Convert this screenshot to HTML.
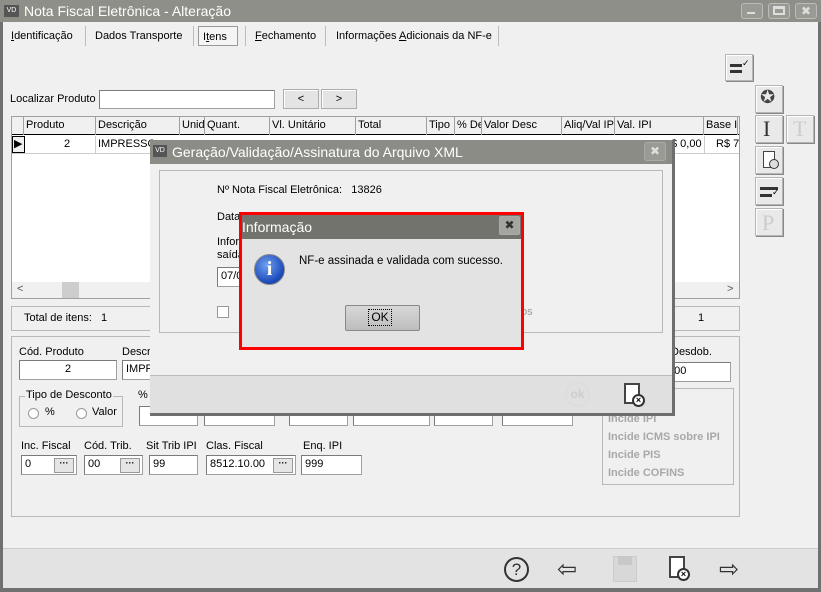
<!DOCTYPE html>
<html><head><meta charset="utf-8">
<style>
*{box-sizing:border-box;margin:0;padding:0}
body{width:821px;height:592px;overflow:hidden;background:#f0f0f0;font-family:"Liberation Sans","DejaVu Sans",sans-serif;font-size:11px;color:#000;position:relative}
.a{position:absolute}
.t{position:absolute;white-space:nowrap}
.inp{position:absolute;background:#fff;border:1px solid #a0a0a0;border-top-color:#7a7a7a;border-left-color:#7a7a7a;padding:2px 3px;white-space:nowrap;overflow:hidden}
.btn{position:absolute;background:#e4e4e4;border:1px solid #adadad;box-shadow:inset 1px 1px #fff}
.hd{position:absolute;top:0;height:18px;border-right:1px solid #a0a0a0;padding:2px 2px;white-space:nowrap;overflow:hidden}
.tb{position:absolute;width:28px;height:28px;background:#e9e9e9;border:1px solid #b5b5b5;box-shadow:inset 1px 1px #fff,1px 1px #888}
.dots{position:absolute;right:2px;top:2px;width:20px;height:15px;background:#e5e5e5;border:1px solid #999;font-size:9px;text-align:center;line-height:9px;font-weight:bold}
.dis{color:#a8a8a8;font-weight:bold;font-size:11px}
</style></head><body>
<div class="a" style="left:0;top:0;width:821px;height:22px;background:#8f8f89"></div>
<div class="a" style="left:4px;top:5px;width:15px;height:12px;background:#555;color:#fff;font-size:7px;text-align:center;line-height:12px">VD</div>
<div class="t" style="left:24px;top:3px;font-size:14px;color:#fff">Nota Fiscal Eletrônica - Alteração</div>
<div class="a" style="left:741px;top:3px;width:22px;height:16px;border:1px solid #bbb;border-radius:3px;background:#9a9a94"></div>
<div class="a" style="left:747px;top:12px;width:8px;height:2px;background:#ddd"></div>
<div class="a" style="left:768px;top:3px;width:22px;height:16px;border:1px solid #bbb;border-radius:3px;background:#9a9a94"></div>
<div class="a" style="left:773px;top:6px;width:12px;height:9px;border:2px solid #ddd;border-top-width:3px"></div>
<div class="a" style="left:795px;top:3px;width:22px;height:16px;border:1px solid #bbb;border-radius:3px;background:#9a9a94;color:#ddd;font-weight:bold;text-align:center;line-height:14px;font-size:12px">✖</div>
<div class="a" style="left:0;top:22px;width:3px;height:570px;background:#707070"></div>
<div class="a" style="left:818px;top:22px;width:3px;height:570px;background:#707070"></div>
<div class="a" style="left:0;top:588px;width:821px;height:4px;background:#707070"></div>

<div class="t" style="left:11px;top:30px"><u>I</u>dentificação</div>
<div class="a" style="left:85px;top:26px;width:1px;height:20px;background:#bbb"></div>
<div class="t" style="left:95px;top:30px">Dados Transporte</div>
<div class="a" style="left:193px;top:26px;width:1px;height:20px;background:#bbb"></div>
<div class="a" style="left:198px;top:26px;width:40px;height:20px;border:1px solid #999;background:#f5f5f5"></div>
<div class="t" style="left:203px;top:31px">I<u>t</u>ens</div>
<div class="a" style="left:245px;top:26px;width:1px;height:20px;background:#bbb"></div>
<div class="t" style="left:255px;top:30px"><u>F</u>echamento</div>
<div class="a" style="left:325px;top:26px;width:1px;height:20px;background:#bbb"></div>
<div class="t" style="left:336px;top:30px">Informações <u>A</u>dicionais da NF-e</div>
<div class="a" style="left:498px;top:26px;width:1px;height:20px;background:#bbb"></div>

<div class="tb" style="left:725px;top:54px;width:28px;height:27px"><div class="a" style="left:4px;top:9px;width:12px;height:3px;background:#333"></div><div class="a" style="left:4px;top:15px;width:12px;height:3px;background:#333"></div><div class="t" style="left:16px;top:3px;font-size:9px">✓</div></div>

<div class="t" style="left:10px;top:93px">Localizar Produto</div>
<div class="inp" style="left:99px;top:90px;width:176px;height:19px"></div>
<div class="btn" style="left:283px;top:89px;width:36px;height:20px;text-align:center;line-height:18px">&lt;</div>
<div class="btn" style="left:321px;top:89px;width:36px;height:20px;text-align:center;line-height:18px">&gt;</div>

<div class="a" style="left:11px;top:116px;width:729px;height:183px;background:#fff;border:1px solid #a0a0a0"></div>
<div class="a" style="left:12px;top:117px;width:727px;height:18px;background:#f0f0f0;border-bottom:1px solid #000">
<div class="hd" style="left:0;width:12px"></div>
<div class="hd" style="left:12px;width:72px">Produto</div>
<div class="hd" style="left:84px;width:84px">Descrição</div>
<div class="hd" style="left:168px;width:25px">Unid</div>
<div class="hd" style="left:193px;width:65px">Quant.</div>
<div class="hd" style="left:258px;width:86px">Vl. Unitário</div>
<div class="hd" style="left:344px;width:71px">Total</div>
<div class="hd" style="left:415px;width:28px">Tipo</div>
<div class="hd" style="left:443px;width:27px">% De</div>
<div class="hd" style="left:470px;width:80px">Valor Desc</div>
<div class="hd" style="left:550px;width:53px">Aliq/Val IP</div>
<div class="hd" style="left:603px;width:89px">Val. IPI</div>
<div class="hd" style="left:692px;width:34px">Base I</div>
</div>
<div class="a" style="left:12px;top:136px;width:13px;height:17px;background:#f0f0f0;border:1px solid #000"></div>
<div class="t" style="left:14px;top:137px;font-size:11px">▶</div>
<div class="t" style="left:64px;top:138px">2</div>
<div class="t" style="left:98px;top:138px">IMPRESSO</div>
<div class="a" style="left:95px;top:136px;width:1px;height:17px;background:#ccc"></div>
<div class="t" style="left:671px;top:138px">$ 0,00</div>
<div class="a" style="left:704px;top:136px;width:1px;height:17px;background:#ccc"></div>
<div class="t" style="left:716px;top:138px">R$ 7</div>
<div class="a" style="left:12px;top:153px;width:727px;height:1px;background:#ccc"></div>
<div class="a" style="left:12px;top:282px;width:727px;height:16px;background:#f0f0f0"></div>
<div class="a" style="left:62px;top:282px;width:17px;height:16px;background:#cdcdcd"></div>
<div class="t" style="left:17px;top:283px;color:#555">&lt;</div>
<div class="t" style="left:727px;top:283px;color:#555">&gt;</div>

<div class="tb" style="left:755px;top:85px"><div class="t" style="left:4px;top:1px;font-size:18px;color:#444">✪</div></div>
<div class="tb" style="left:755px;top:115px"><div class="t" style="left:7px;top:0;font-size:22px;font-family:'Liberation Serif',serif;color:#333">I</div></div>
<div class="tb" style="left:786px;top:115px"><div class="t" style="left:6px;top:0;font-size:22px;font-family:'Liberation Serif',serif;color:#ccc">T</div></div>
<div class="tb" style="left:755px;top:146px"><div class="a" style="left:7px;top:4px;width:12px;height:17px;border:1px solid #444;background:#fff"></div><div class="a" style="left:13px;top:12px;width:10px;height:10px;border-radius:50%;border:1px solid #333;background:#ddd"></div></div>
<div class="tb" style="left:755px;top:177px"><div class="a" style="left:4px;top:9px;width:18px;height:3px;background:#333"></div><div class="a" style="left:4px;top:16px;width:12px;height:3px;background:#333"></div><div class="t" style="left:16px;top:9px;font-size:9px">✓</div></div>
<div class="tb" style="left:755px;top:208px"><div class="t" style="left:6px;top:1px;font-size:22px;font-family:'Liberation Serif',serif;color:#ccc">P</div></div>

<div class="a" style="left:11px;top:306px;width:729px;height:25px;border:1px solid #b8b8b8"></div>
<div class="t" style="left:24px;top:312px">Total de itens:&nbsp;&nbsp; 1</div>
<div class="t" style="left:698px;top:312px">1</div>

<div class="a" style="left:11px;top:336px;width:729px;height:181px;border:1px solid #b8b8b8"></div>
<div class="t" style="left:19px;top:346px">Cód. Produto</div>
<div class="inp" style="left:19px;top:360px;width:98px;height:20px;text-align:center">2</div>
<div class="t" style="left:122px;top:346px">Descri</div>
<div class="inp" style="left:122px;top:360px;width:40px;height:20px">IMPR</div>
<div class="t" style="left:671px;top:346px">Desdob.</div>
<div class="inp" style="left:665px;top:362px;width:66px;height:20px;border-left:none">000</div>
<div class="a" style="left:19px;top:396px;width:104px;height:31px;border:1px solid #b8b8b8"></div>
<div class="t" style="left:25px;top:389px;background:#f0f0f0;padding:0 1px">Tipo de Desconto</div>
<div class="a" style="left:28px;top:408px;width:11px;height:11px;border-radius:50%;border:1px solid #999;background:#fff"></div>
<div class="t" style="left:45px;top:406px">%</div>
<div class="a" style="left:76px;top:408px;width:11px;height:11px;border-radius:50%;border:1px solid #999;background:#fff"></div>
<div class="t" style="left:92px;top:406px">Valor</div>
<div class="t" style="left:138px;top:389px">%</div>
<div class="inp" style="left:139px;top:406px;width:59px;height:20px"></div>
<div class="inp" style="left:204px;top:406px;width:71px;height:20px"></div>
<div class="inp" style="left:289px;top:406px;width:59px;height:20px"></div>
<div class="inp" style="left:353px;top:406px;width:77px;height:20px"></div>
<div class="inp" style="left:434px;top:406px;width:59px;height:20px"></div>
<div class="inp" style="left:502px;top:406px;width:71px;height:20px"></div>

<div class="t" style="left:21px;top:440px">Inc. Fiscal</div>
<div class="inp" style="left:21px;top:455px;width:56px;height:20px">0<div class="dots">···</div></div>
<div class="t" style="left:84px;top:440px">Cód. Trib.</div>
<div class="inp" style="left:84px;top:455px;width:59px;height:20px">00<div class="dots">···</div></div>
<div class="t" style="left:146px;top:440px">Sit Trib IPI</div>
<div class="inp" style="left:149px;top:455px;width:49px;height:20px">99</div>
<div class="t" style="left:206px;top:440px">Clas. Fiscal</div>
<div class="inp" style="left:206px;top:455px;width:90px;height:20px">8512.10.00<div class="dots">···</div></div>
<div class="t" style="left:303px;top:440px">Enq. IPI</div>
<div class="inp" style="left:301px;top:455px;width:61px;height:20px">999</div>

<div class="a" style="left:602px;top:388px;width:132px;height:97px;border:1px solid #b8b8b8"></div>
<div class="t dis" style="left:608px;top:413px">Incide IPI</div>
<div class="t dis" style="left:608px;top:431px">Incide ICMS sobre IPI</div>
<div class="t dis" style="left:608px;top:449px">Incide PIS</div>
<div class="t dis" style="left:608px;top:467px">Incide COFINS</div>

<div class="a" style="left:3px;top:548px;width:815px;height:40px;background:#e3e3e3;border-top:1px solid #ccc"></div>
<div class="a" style="left:504px;top:557px;width:25px;height:25px;border:2px solid #333;border-radius:50%;text-align:center;font-size:17px;line-height:21px;color:#333">?</div>
<div class="t" style="left:557px;top:555px;font-size:24px;color:#333">⇦</div>
<div class="a" style="left:613px;top:556px;width:24px;height:26px;background:#d8d8d8;border:1px solid #ccc"></div>
<div class="a" style="left:618px;top:556px;width:14px;height:9px;background:#c8c8c8"></div>
<div class="a" style="left:669px;top:556px;width:16px;height:22px;border:2px solid #444;background:#fff"></div>
<div class="a" style="left:677px;top:568px;width:13px;height:13px;border-radius:50%;border:2px solid #333;background:#fff;font-size:9px;text-align:center;line-height:9px;font-weight:bold">×</div>
<div class="t" style="left:719px;top:555px;font-size:24px;color:#333">⇨</div>

<div class="a" style="left:150px;top:140px;width:525px;height:276px;background:#6e6e6e"></div>
<div class="a" style="left:150px;top:140px;width:522px;height:273px;background:#f0f0f0"></div>
<div class="a" style="left:150px;top:140px;width:522px;height:24px;background:#8c8c86"></div>
<div class="a" style="left:153px;top:145px;width:14px;height:12px;background:#555;color:#fff;font-size:7px;text-align:center;line-height:12px">VD</div>
<div class="t" style="left:172px;top:144px;font-size:14px;color:#fff">Geração/Validação/Assinatura do Arquivo XML</div>
<div class="a" style="left:644px;top:142px;width:22px;height:19px;border:1px solid #aaa;border-radius:3px;background:#9a9a94;color:#ddd;font-weight:bold;text-align:center;font-size:12px;line-height:17px">✖</div>
<div class="a" style="left:159px;top:170px;width:504px;height:163px;border:1px solid #b8b8b8"></div>
<div class="t" style="left:217px;top:184px">Nº Nota Fiscal Eletrônica:&nbsp;&nbsp; 13826</div>
<div class="t" style="left:217px;top:211px">Data</div>
<div class="t" style="left:217px;top:236px;line-height:13px">Infor<br>saída</div>
<div class="inp" style="left:217px;top:267px;width:30px;height:20px">07/0</div>
<div class="a" style="left:217px;top:306px;width:12px;height:12px;border:1px solid #999;background:#fff"></div>
<div class="t" style="left:521px;top:306px;color:#999">os</div>
<div class="a" style="left:150px;top:375px;width:522px;height:38px;background:#e0e0e0;border-top:1px solid #bbb"></div>
<div class="a" style="left:565px;top:382px;width:25px;height:25px;border:2px solid #ddd;border-radius:50%;color:#ccc;font-weight:bold;text-align:center;line-height:21px;font-size:12px">ok</div>
<div class="a" style="left:624px;top:383px;width:16px;height:21px;border:2px solid #444;background:#fff"></div>
<div class="a" style="left:632px;top:394px;width:13px;height:13px;border-radius:50%;border:2px solid #333;background:#fff;font-size:9px;text-align:center;line-height:9px;font-weight:bold">×</div>

<div class="a" style="left:239px;top:212px;width:285px;height:138px;border:3px solid #f00;background:#e3e3e3"></div>
<div class="a" style="left:242px;top:215px;width:279px;height:24px;background:#73736d"></div>
<div class="t" style="left:242px;top:219px;font-size:14px;color:#fff">Informação</div>
<div class="a" style="left:499px;top:216px;width:21px;height:19px;border:1px solid #aaa;border-radius:2px;background:#a5a5a0;color:#333;font-weight:bold;text-align:center;font-size:12px;line-height:17px">✖</div>
<div class="a" style="left:254px;top:254px;width:31px;height:31px;border-radius:50%;background:radial-gradient(circle at 40% 35%,#6fa0f0,#1a48b8 70%);border:1px solid #888;color:#fff;font-family:'Liberation Serif',serif;font-weight:bold;font-size:20px;text-align:center;line-height:29px">i</div>
<div class="t" style="left:299px;top:255px;font-size:11.5px">NF-e assinada e validada com sucesso.</div>
<div class="a" style="left:345px;top:305px;width:75px;height:26px;border:1px solid #888;border-radius:2px;background:linear-gradient(#d8d8d8,#bdbdbd)"></div>
<div class="a" style="left:368px;top:309px;width:24px;height:17px;border:1px dotted #000;text-align:center;font-size:12px;line-height:15px">OK</div>
</body></html>
